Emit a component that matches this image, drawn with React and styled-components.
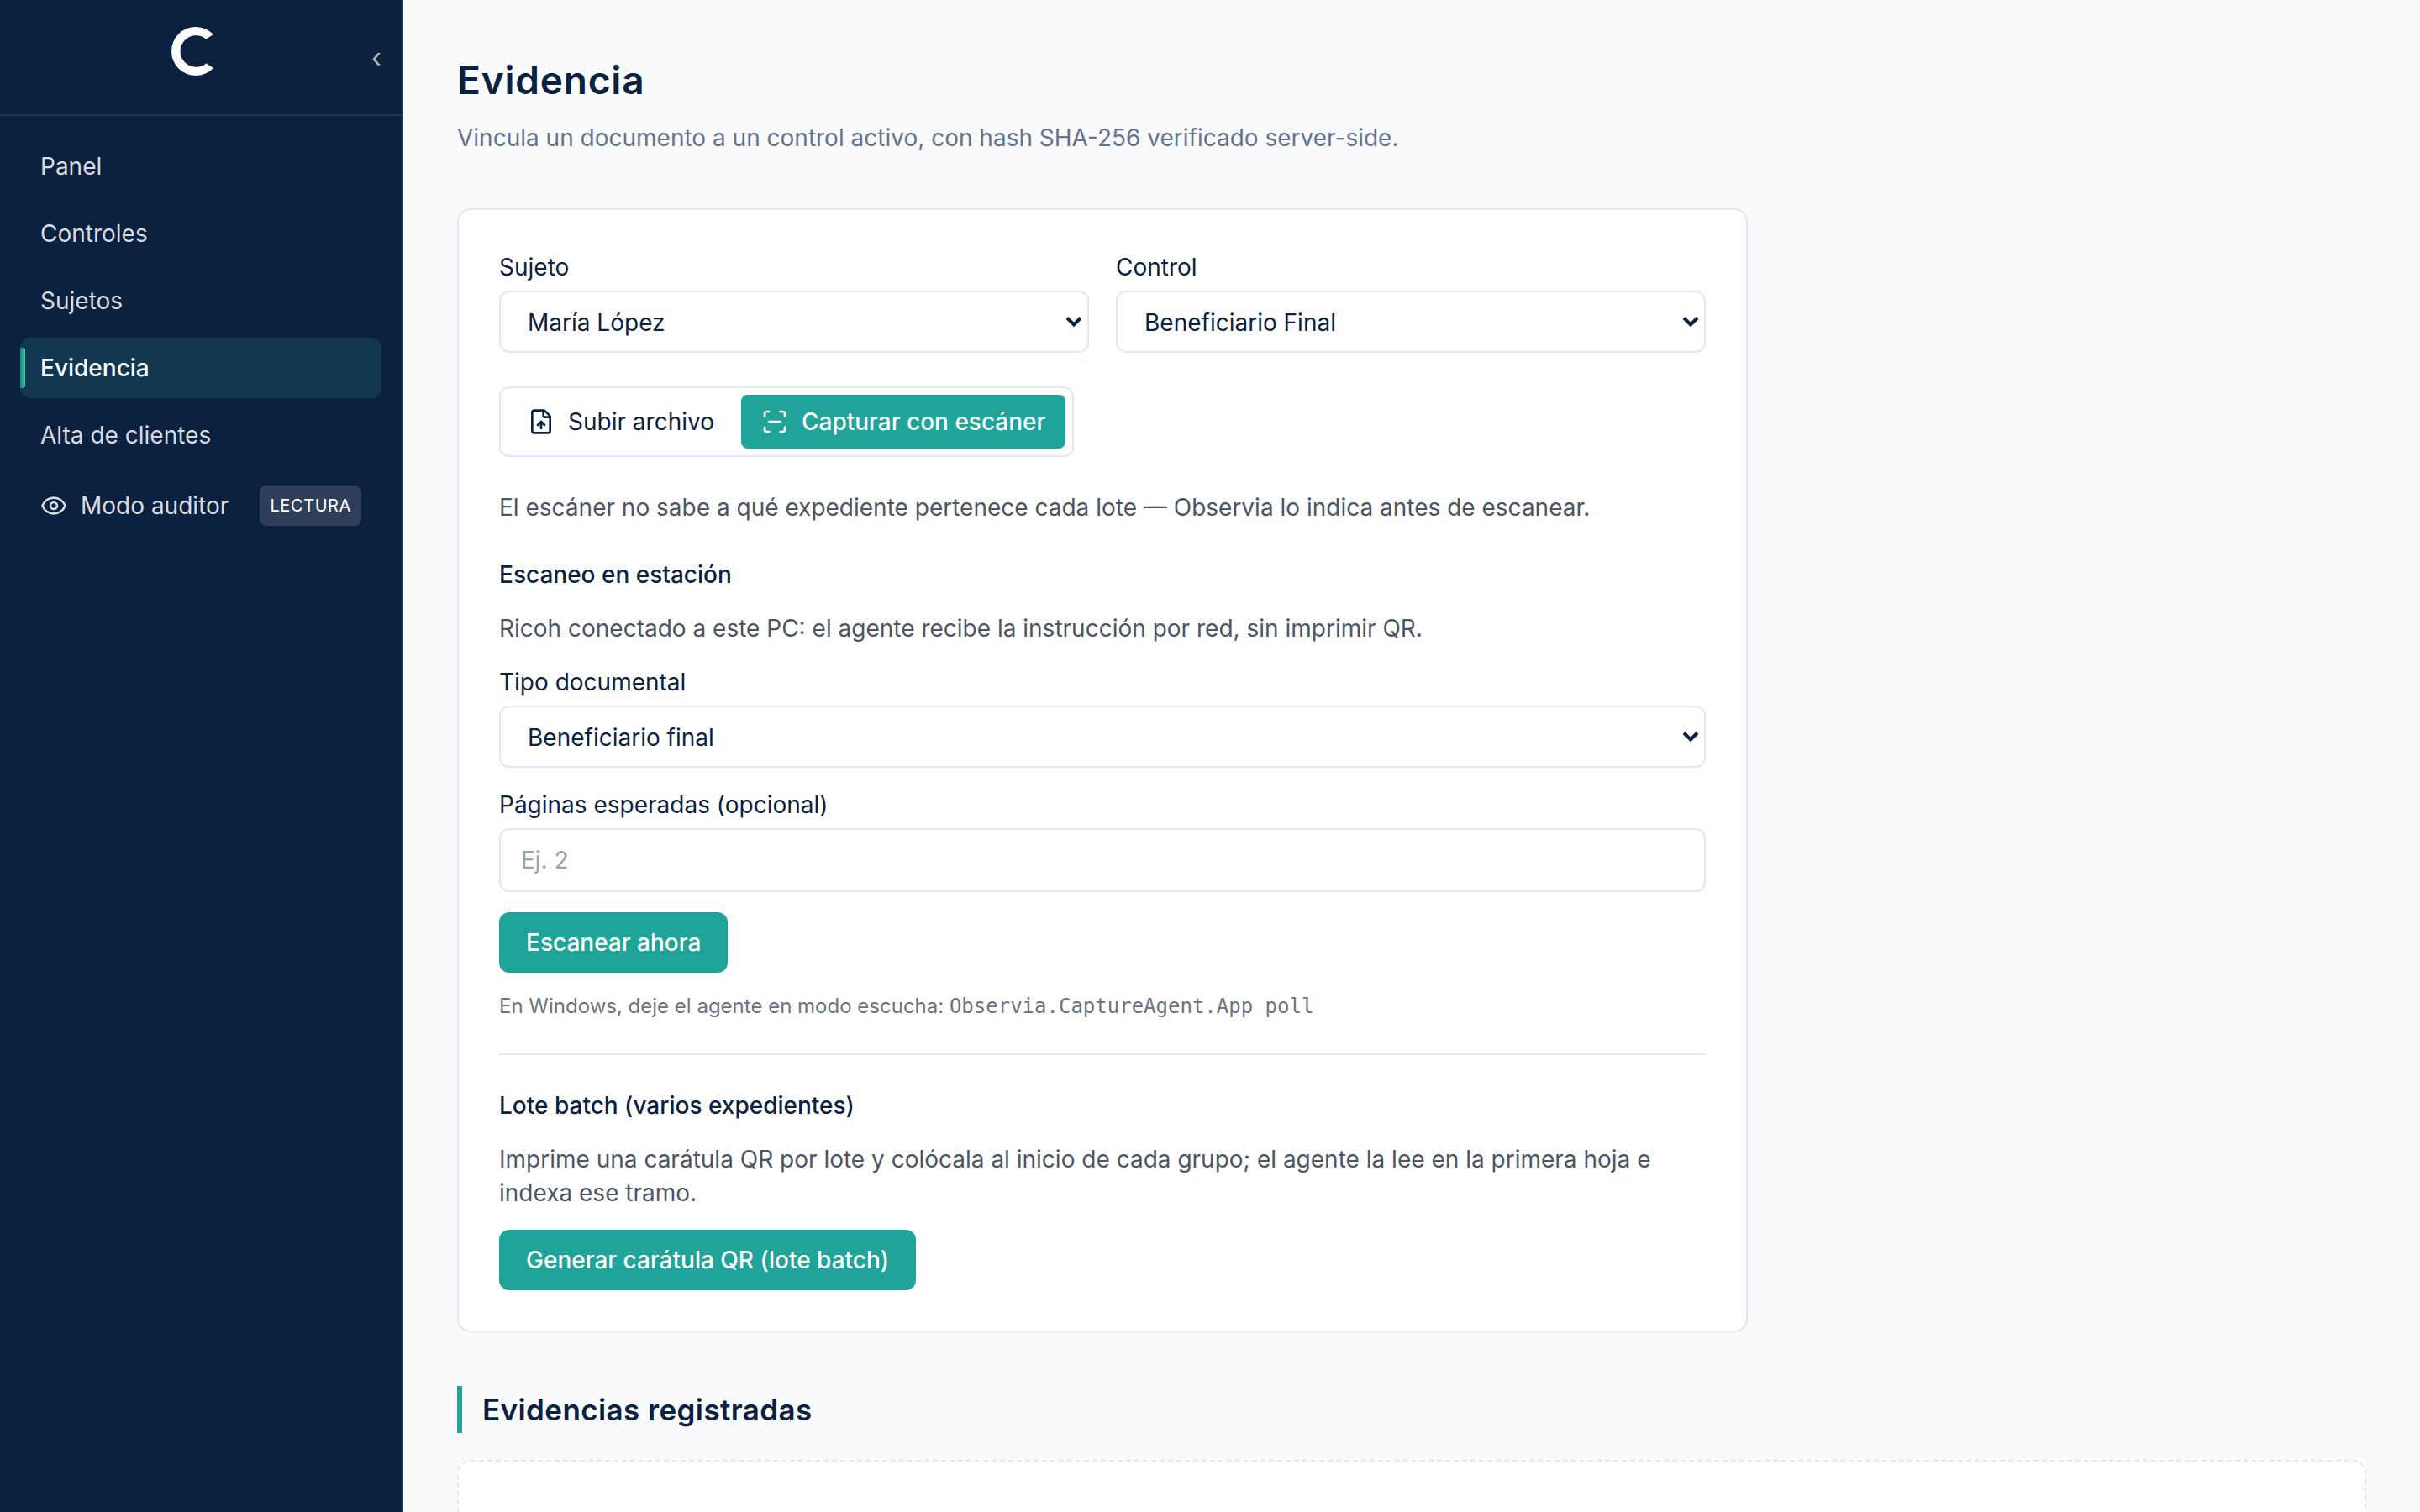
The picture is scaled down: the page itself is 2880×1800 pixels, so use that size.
import React from 'react';
import styled, { createGlobalStyle, css } from 'styled-components';
import { Eye, FileUp } from 'lucide-react';

const navItems = ['Panel', 'Controles', 'Sujetos', 'Evidencia', 'Alta de clientes'];

const ScanIcon = () => (
  <svg width="32" height="32" viewBox="0 0 24 24" fill="none" stroke="currentColor" strokeWidth="2" strokeLinecap="round" strokeLinejoin="round">
    <path d="M3 7V5a2 2 0 0 1 2-2h2" />
    <path d="M17 3h2a2 2 0 0 1 2 2v2" />
    <path d="M21 17v2a2 2 0 0 1-2 2h-2" />
    <path d="M7 21H5a2 2 0 0 1-2-2v-2" />
    <path d="M7 12h10" />
  </svg>
);

const Logo = () => (
  <svg width="50" height="58" viewBox="0 0 50 58" fill="#fff">
    <path d="M50 9 A29 29 0 1 0 50 49 L41.3 43.5 A18.8 18.8 0 1 1 41.3 14.5 Z" />
  </svg>
);

const SelectField = ({ label, value }) => (
  <Field>
    <Label>{label}</Label>
    <SelectBox>
      <span>{value}</span>
      <Chevron width="20" height="14" viewBox="0 0 20 14" fill="none">
        <path d="M2 2.5 L10 10.5 L18 2.5" stroke="#0b2140" strokeWidth="4" />
      </Chevron>
    </SelectBox>
  </Field>
);

const App = () => {
  return (
    <Page>
      <GlobalStyle />
      <Sidebar>
        <SidebarHeader>
          <Logo />
          <CollapseButton>‹</CollapseButton>
        </SidebarHeader>
        <Nav>
          {navItems.map(item => (
            <NavItem key={item} $active={item === 'Evidencia'}>{item}</NavItem>
          ))}
          <NavItem>
            <Eye size={32} strokeWidth={2} />
            <span>Modo auditor</span>
            <Badge>LECTURA</Badge>
          </NavItem>
        </Nav>
      </Sidebar>
      <Main>
        <Title>Evidencia</Title>
        <Subtitle>Vincula un documento a un control activo, con hash SHA-256 verificado server-side.</Subtitle>
        <Card>
          <FieldRow>
            <SelectField label="Sujeto" value="María López" />
            <SelectField label="Control" value="Beneficiario Final" />
          </FieldRow>
          <Tabs>
            <Tab><FileUp size={32} strokeWidth={2} />Subir archivo</Tab>
            <Tab $active><ScanIcon />Capturar con escáner</Tab>
          </Tabs>
          <Text>El escáner no sabe a qué expediente pertenece cada lote — Observia lo indica antes de escanear.</Text>
          <Section>
            <SectionTitle>Escaneo en estación</SectionTitle>
            <Text>Ricoh conectado a este PC: el agente recibe la instrucción por red, sin imprimir QR.</Text>
            <SelectField label="Tipo documental" value="Beneficiario final" />
            <Field>
              <Label>Páginas esperadas (opcional)</Label>
              <Input placeholder="Ej. 2" />
            </Field>
            <Button>Escanear ahora</Button>
            <Hint>
              En Windows, deje el agente en modo escucha: <Code>Observia.CaptureAgent.App poll</Code>
            </Hint>
          </Section>
          <Section $divided>
            <SectionTitle>Lote batch (varios expedientes)</SectionTitle>
            <Text>
              Imprime una carátula QR por lote y colócala al inicio de cada grupo; el agente la lee en la primera hoja e
              indexa ese tramo.
            </Text>
            <Button>Generar carátula QR (lote batch)</Button>
          </Section>
        </Card>
        <ListTitle>Evidencias registradas</ListTitle>
        <EmptyBox />
      </Main>
    </Page>
  );
};

const GlobalStyle = createGlobalStyle`
  * {
    box-sizing: border-box;
  }

  body {
    margin: 0;
    overflow: hidden;
    background: #f8fafc;
    color: #0b2140;
    font-family: Inter, sans-serif;
    font-size: 28px;
    line-height: 40px;
    -webkit-font-smoothing: antialiased;
  }

  h1, h2, h3, p {
    margin: 0;
  }
`;

const Page = styled.div`
  display: flex;
  height: 1800px;
  overflow: hidden;
`;

const Sidebar = styled.aside`
  flex: none;
  width: 480px;
  background: #0b2140;
  border-right: 2px solid #23334f;
`;

const SidebarHeader = styled.div`
  position: relative;
  display: flex;
  justify-content: center;
  height: 138px;
  padding: 32px 20px 0 0;
  border-bottom: 2px solid #23334f;
`;

const CollapseButton = styled.button`
  position: absolute;
  top: 49px;
  right: 16px;
  width: 28px;
  height: 40px;
  padding: 0;
  border: 0;
  background: none;
  color: rgba(255, 255, 255, 0.7);
  font: 32px/40px Inter, sans-serif;
`;

const Nav = styled.nav`
  display: flex;
  flex-direction: column;
  gap: 8px;
  padding: 24px;
`;

const NavItem = styled.a`
  position: relative;
  display: flex;
  align-items: center;
  gap: 16px;
  padding: 16px 24px;
  border-radius: 12px;
  color: rgba(255, 255, 255, 0.85);

  ${({ $active }) => $active && css`
    background: #113850;
    color: #fff;
    font-weight: 500;

    &::before {
      content: '';
      position: absolute;
      left: 0;
      top: 12px;
      width: 6px;
      height: 48px;
      border-radius: 0 4px 4px 0;
      background: linear-gradient(90deg, #1b7f80, #3fcfb2);
    }
  `}
`;

const Badge = styled.span`
  margin-left: auto;
  padding: 8px 12px;
  border-radius: 8px;
  background: #2f3f5a;
  color: #fff;
  font-size: 20px;
  font-weight: 400;
  line-height: 32px;
  letter-spacing: 0.6px;
`;

const Main = styled.main`
  flex: 1;
  padding: 64px 64px 0;
`;

const Title = styled.h1`
  font-size: 46px;
  font-weight: 600;
  line-height: 63px;
  letter-spacing: 0.8px;
`;

const Subtitle = styled.p`
  margin-top: 17px;
  color: #64748b;
`;

const Card = styled.section`
  width: 1536px;
  margin-top: 64px;
  padding: 48px;
  border: 2px solid #e2e8f0;
  border-radius: 16px;
  background: #fff;
`;

const FieldRow = styled.div`
  display: grid;
  grid-template-columns: 1fr 1fr;
  gap: 32px;
`;

const Field = styled.div`
  display: flex;
  flex-direction: column;
  gap: 8px;
`;

const Label = styled.label`
  line-height: 40px;
`;

const SelectBox = styled.div`
  display: flex;
  align-items: center;
  justify-content: space-between;
  height: 74px;
  padding: 2px 6px 0 32px;
  border: 2px solid #e2e8f0;
  border-radius: 12px;
  background: #fff;
`;

const Chevron = styled.svg`
  margin-bottom: 2px;
`;

const Input = styled.input`
  width: 100%;
  height: 76px;
  padding: 0 24px;
  border: 2px solid #e2e8f0;
  border-radius: 12px;
  background: #fff;
  font: 28px/40px Inter, sans-serif;

  &::placeholder {
    color: #9ca3af;
  }
`;

const Tabs = styled.div`
  display: flex;
  gap: 8px;
  width: fit-content;
  margin: 40px 0;
  padding: 8px;
  border: 2px solid #e2e8f0;
  border-radius: 12px;
`;

const Tab = styled.button`
  display: flex;
  align-items: center;
  gap: 16px;
  height: 64px;
  padding: 0 24px;
  border: 0;
  border-radius: 8px;
  background: ${({ $active }) => ($active ? '#20a49a' : 'transparent')};
  color: ${({ $active }) => ($active ? '#fff' : '#0b2140')};
  font: ${({ $active }) => ($active ? 500 : 400)} 28px/40px Inter, sans-serif;
`;

const Text = styled.p`
  color: #4b5563;
`;

const Section = styled.section`
  display: flex;
  flex-direction: column;
  align-items: stretch;
  gap: 24px;
  margin-top: 40px;

  ${({ $divided }) => $divided && css`
    padding-top: 40px;
    border-top: 2px solid #e5e7eb;
  `}
`;

const SectionTitle = styled.h3`
  font-size: 28px;
  font-weight: 500;
`;

const Button = styled.button`
  align-self: flex-start;
  height: 72px;
  padding: 0 32px;
  border: 0;
  border-radius: 12px;
  background: #20a49a;
  color: #fff;
  font: 500 28px/40px Inter, sans-serif;
`;

const Hint = styled.p`
  color: #6b7280;
  font-size: 24px;
  line-height: 32px;
`;

const Code = styled.code`
  font-family: 'DejaVu Sans Mono', monospace;
  font-size: 24px;
`;

const ListTitle = styled.h2`
  margin-top: 64px;
  padding-left: 24px;
  border-left: 6px solid #20a49a;
  font-size: 35px;
  font-weight: 600;
  line-height: 56px;
  letter-spacing: 0.4px;
`;

const EmptyBox = styled.div`
  height: 200px;
  margin-top: 32px;
  border: 2px dashed #e2e8f0;
  border-radius: 16px;
  background: #fff;
`;

export default App;
